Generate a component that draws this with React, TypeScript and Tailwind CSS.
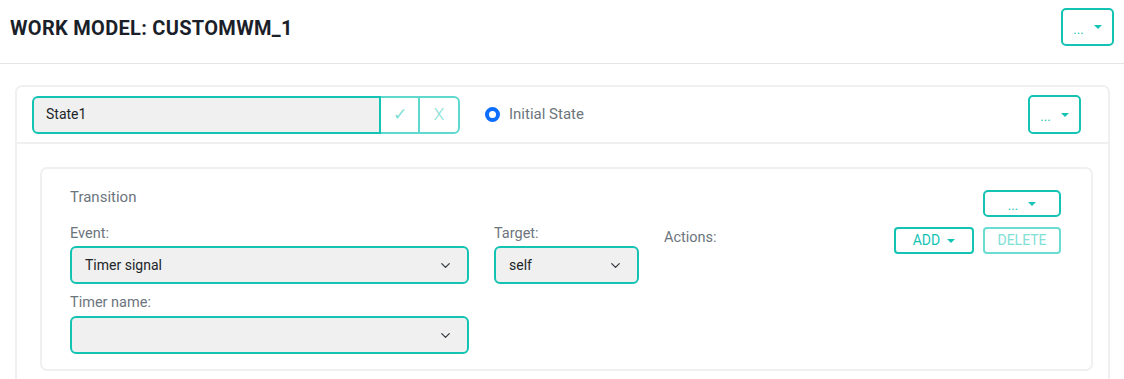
import { ChevronDown } from 'lucide-react';

const font = { fontFamily: 'Roboto, "Liberation Sans", sans-serif' };

function Caret() {
  return (
    <span className="inline-block w-0 h-0 border-x-[4px] border-x-transparent border-t-[4px] border-t-[#14c3b3]" />
  );
}

function DotsButton({ className = '' }: { className?: string }) {
  return (
    <button
      className={`flex items-center justify-center gap-[10px] border-2 border-[#14c3b3] rounded-[5px] bg-white text-[#14c3b3] text-[13px] ${className}`}
    >
      <span className="leading-none pt-[4px]">...</span>
      <Caret />
    </button>
  );
}

function Select({ value, className = '' }: { value: string; className?: string }) {
  return (
    <div
      className={`flex items-center justify-between h-[38px] border-2 border-[#14c3b3] rounded-[6px] bg-[#f0f0f0] pl-[13px] pr-[14px] text-[14px] text-[#212529] ${className}`}
    >
      <span>{value}</span>
      <ChevronDown size={15} strokeWidth={2} className="text-[#343a40]" />
    </div>
  );
}

export default function App() {
  return (
    <div className="w-[1124px] h-[379px] bg-white overflow-hidden" style={font}>
      <header className="h-[64px] flex items-start justify-between pl-[10px] pr-[10px] pt-[8px] border-b border-[#e4e4e4]">
        <h1 className="h-[39px] flex items-center text-[20px] font-bold text-[#1b1f2a] tracking-[0.3px]">
          WORK MODEL: CUSTOMWM_1
        </h1>
        <DotsButton className="w-[53px] h-[38px]" />
      </header>

      <div className="mt-[21px] ml-[15px] mr-[14px] border-2 border-[#f0f0f0] rounded-[7px]">
        <div className="flex items-center h-[57px] pl-[15px] pr-[27px] border-b-2 border-[#f0f0f0]">
          <div className="flex h-[38px]">
            <div className="w-[349px] flex items-center border-2 border-[#14c3b3] rounded-l-[6px] bg-[#f0f0f0] pl-[12px] text-[14px] text-[#212529]">
              State1
            </div>
            <button className="w-[39px] flex items-center justify-center border-2 border-l-0 border-[#5fd9cd] text-[#7fe0d6] text-[17px]">
              ✓
            </button>
            <button className="w-[42px] -ml-[2px] flex items-center justify-center border-2 border-[#5fd9cd] rounded-r-[6px] text-[#7fe0d6] text-[17px] font-light">
              X
            </button>
          </div>
          <div className="flex items-center ml-[25px] gap-[9px]">
            <span className="w-[15px] h-[15px] rounded-full border-[4px] border-[#0d6efd] bg-white" />
            <span className="text-[15px] text-[#6c757d]">Initial State</span>
          </div>
          <DotsButton className="ml-auto w-[53px] h-[39px]" />
        </div>

        <div className="pt-[23px] pl-[23px] pr-[15px] pb-[20px]">
          <div className="flex border-2 border-[#f0f0f0] rounded-[7px] pt-[18px] pl-[28px] pr-[30px] pb-[15px]">
            <div className="flex-1">
              <div className="text-[15px] leading-[20px] text-[#6c757d]">Transition</div>
              <div className="flex gap-[25px] mt-[17px]">
                <div className="w-[399px]">
                  <div className="text-[14.5px] leading-[20px] text-[#6c757d] mb-[2px]">Event:</div>
                  <Select value="Timer signal" />
                  <div className="text-[14.5px] leading-[20px] text-[#6c757d] mt-[9px] mb-[3px]">Timer name:</div>
                  <Select value="" />
                </div>
                <div className="w-[145px]">
                  <div className="text-[14.5px] leading-[20px] text-[#6c757d] mb-[2px]">Target:</div>
                  <Select value="self" />
                </div>
                <div className="text-[14.5px] leading-[20px] text-[#6c757d] mt-[4px]">Actions:</div>
              </div>
            </div>
            <div className="flex flex-col items-end pt-[3px]">
              <DotsButton className="w-[78px] h-[27px]" />
              <div className="flex gap-[9px] mt-[10px]">
                <button className="w-[80px] h-[27px] flex items-center justify-center gap-[7px] border-2 border-[#14c3b3] rounded-[4px] text-[#14c3b3] text-[14px]">
                  ADD
                  <Caret />
                </button>
                <button className="w-[78px] h-[27px] flex items-center justify-center border-2 border-[#6adcd1] rounded-[4px] text-[#7fe0d6] text-[14px]">
                  DELETE
                </button>
              </div>
            </div>
          </div>
        </div>
      </div>
    </div>
  );
}
